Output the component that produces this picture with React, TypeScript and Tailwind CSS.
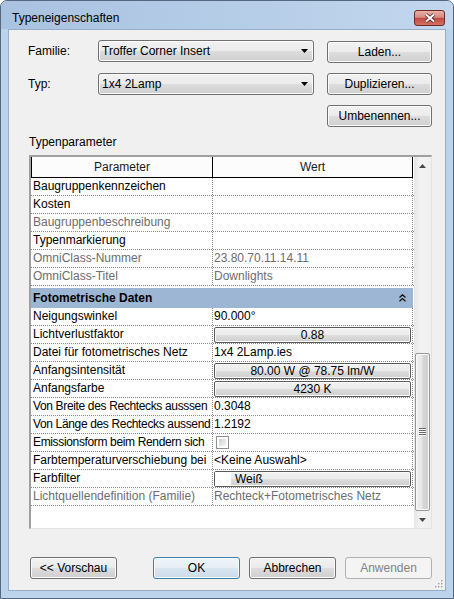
import type { ReactNode } from 'react';

type Param = {
  label: string;
  value?: string;
  readOnly?: boolean;
  tight?: boolean;
  kind?: 'text' | 'button' | 'check' | 'swatch';
};

// Identity data rows above the group header
const identity: Param[] = [
  { label: 'Baugruppenkennzeichen' },
  { label: 'Kosten' },
  { label: 'Baugruppenbeschreibung', readOnly: true },
  { label: 'Typenmarkierung' },
  { label: 'OmniClass-Nummer', value: '23.80.70.11.14.11', readOnly: true },
  { label: 'OmniClass-Titel', value: 'Downlights', readOnly: true },
];

// Labels are cut at the column edge the same way the grid shows them
const photometric: Param[] = [
  { label: 'Neigungswinkel', value: '90.000°' },
  { label: 'Lichtverlustfaktor', value: '0.88', kind: 'button' },
  { label: 'Datei für fotometrisches Netz', value: '1x4 2Lamp.ies' },
  { label: 'Anfangsintensität', value: '80.00 W @ 78.75 lm/W', kind: 'button' },
  { label: 'Anfangsfarbe', value: '4230 K', kind: 'button' },
  { label: 'Von Breite des Rechtecks ausssen', value: '0.3048', tight: true },
  { label: 'Von Länge des Rechtecks aussend', value: '1.2192', tight: true },
  { label: 'Emissionsform beim Rendern sich', kind: 'check', tight: true },
  { label: 'Farbtemperaturverschiebung bei', value: '<Keine Auswahl>' },
  { label: 'Farbfilter', value: 'Weiß', kind: 'swatch' },
  {
    label: 'Lichtquellendefinition (Familie)',
    value: 'Rechteck+Fotometrisches Netz',
    readOnly: true,
  },
];

const btnFace =
  'bg-[linear-gradient(#f2f2f2,#ebebeb_50%,#dddddd_50%,#cfcfcf)] shadow-[inset_0_0_0_1px_#fbfbfb]';

function WinButton({
  children,
  variant = 'normal',
}: {
  children: ReactNode;
  variant?: 'normal' | 'default' | 'disabled';
}) {
  const look =
    variant === 'default'
      ? 'border-[#3c7fb1] bg-[linear-gradient(#eef4fa,#e6eef6_50%,#d9e5ef_50%,#cddced)] shadow-[inset_0_0_0_1px_#f6fbff] text-black'
      : variant === 'disabled'
        ? 'border-[#adb2b5] bg-[#f4f4f4] text-[#838383]'
        : `border-[#707070] ${btnFace} text-black`;
  return (
    <div
      className={`flex h-[22px] w-full items-center justify-center rounded-[3px] border ${look}`}
    >
      {children}
    </div>
  );
}

function Combo({ text }: { text: string }) {
  return (
    <div
      className={`flex h-[22px] w-[216px] items-center justify-between rounded-[3px] border border-[#707070] pr-[5px] pl-[3px] ${btnFace}`}
    >
      <span>{text}</span>
      <svg width="7" height="4" viewBox="0 0 7 4">
        <path d="M0 0h7L3.5 4z" fill="#000" />
      </svg>
    </div>
  );
}

function CellButton({ children }: { children: ReactNode }) {
  return (
    <div
      className={`flex h-[16px] w-full items-center justify-center rounded-[2px] border border-[#5a5a5a] leading-none ${btnFace}`}
    >
      {children}
    </div>
  );
}

function ParamRow({ p }: { p: Param }) {
  const tone = p.readOnly ? 'text-[#6d6d6d]' : 'text-black';
  let value: ReactNode = null;
  if (p.kind === 'button') {
    value = <CellButton>{p.value}</CellButton>;
  } else if (p.kind === 'check') {
    value = (
      <div className="ml-[2px] h-[13px] w-[13px] border border-[#8e8f8f] bg-white p-[2px]">
        <div className="h-full w-full bg-linear-to-br from-[#cbcfd5] to-[#f6f6f6]" />
      </div>
    );
  } else if (p.kind === 'swatch') {
    value = (
      <div
        className={`flex h-[16px] w-full items-center rounded-[2px] border border-[#5a5a5a] leading-none ${btnFace}`}
      >
        <div className="h-full w-[16px] bg-white" />
        <span className="pl-[4px]">{p.value}</span>
      </div>
    );
  } else if (p.value) {
    value = <span className={tone}>{p.value}</span>;
  }
  return (
    <div className="flex h-[18px] border-b border-dotted border-[#8a8a8a]">
      <div
        className={`w-[182px] overflow-hidden border-r border-dotted border-[#8a8a8a] pl-[2px] leading-[17px] whitespace-nowrap ${tone} ${p.tight ? 'tracking-[-0.35px]' : ''}`}
      >
        {p.label}
      </div>
      <div className="flex w-[200px] items-center border-r border-dotted border-[#8a8a8a] pr-[1px] pl-[1px] leading-[17px] whitespace-nowrap">
        {value}
      </div>
    </div>
  );
}

function ScrollBar() {
  return (
    <div className="flex w-[17px] flex-col bg-[linear-gradient(90deg,#e6e6e6,#f3f3f3_40%,#f0f0f0)]">
      <div className="flex h-[17px] items-center justify-center">
        <svg width="7" height="4" viewBox="0 0 7 4">
          <path d="M3.5 0L7 4H0z" fill="#4a4a4a" />
        </svg>
      </div>
      <div className="flex flex-1 flex-col justify-end px-[1px]">
        <div className="flex h-[158px] items-center justify-center rounded-[2px] border border-[#979797] bg-[linear-gradient(90deg,#f2f2f2,#e6e6e6_45%,#d6d6d6_55%,#cfcfcf)] shadow-[inset_0_0_0_1px_#f9f9f9]">
          <svg width="7" height="8" viewBox="0 0 7 8">
            <path d="M0 0.5h7M0 2.5h7M0 4.5h7M0 6.5h7" stroke="#6a6a6a" />
            <path d="M0 1.5h7M0 3.5h7M0 5.5h7M0 7.5h7" stroke="#fcfcfc" />
          </svg>
        </div>
      </div>
      <div className="flex h-[17px] items-center justify-center">
        <svg width="7" height="4" viewBox="0 0 7 4">
          <path d="M0 0h7L3.5 4z" fill="#4a4a4a" />
        </svg>
      </div>
    </div>
  );
}

export default function App() {
  return (
    <div className="flex h-[599px] w-[454px] flex-col rounded-t-[7px] border border-[#55687f] bg-[#bcd3ec] font-['Liberation_Sans',Arial,sans-serif] text-[12px] text-black">
      {/* title bar */}
      <div className="flex h-[28px] shrink-0 items-start justify-between rounded-t-[6px] bg-linear-to-r from-[#a9c2e0] to-[#c2d7ee] pr-[8px] pl-[11px]">
        <span className="pt-[10px] leading-[15px] text-black">Typeneigenschaften</span>
        <div className="mt-[9px] flex h-[16px] w-[31px] items-center justify-center rounded-[3px] border border-[#6d2b27] bg-[linear-gradient(#eab0a7,#d98b80_45%,#c24a40_52%,#d56e63)]">
          <svg width="14" height="10" viewBox="0 0 14 10">
            <path d="M3 1.5l8 7M11 1.5l-8 7" stroke="#4a1f1c" strokeWidth="3.6" />
            <path d="M3 1.5l8 7M11 1.5l-8 7" stroke="#fff" strokeWidth="2" />
          </svg>
        </div>
      </div>

      {/* client */}
      <div className="relative mx-[7px] mb-[7px] flex flex-1 flex-col border border-[#97acc6] bg-[#f0f0f0]">
        <div className="flex">
          <div className="flex flex-col gap-[11px] pt-[10px] pl-[19px]">
            <div className="flex items-center">
              <span className="w-[70px]">Familie:</span>
              <Combo text="Troffer Corner Insert" />
            </div>
            <div className="flex items-center">
              <span className="w-[70px]">Typ:</span>
              <Combo text="1x4 2Lamp" />
            </div>
          </div>
          <div className="ml-[13px] flex w-[105px] flex-col gap-[10px] pt-[11px]">
            <WinButton>Laden...</WinButton>
            <WinButton>Duplizieren...</WinButton>
            <WinButton>Umbenennen...</WinButton>
          </div>
        </div>

        <div className="mt-[8px] pl-[20px] leading-[15px]">Typenparameter</div>

        {/* parameter grid */}
        <div className="mt-[5px] ml-[20px] flex h-[374px] w-[403px] border-t-2 border-r border-b border-l-2 border-t-[#a0a0a0] border-r-[#e3e3e3] border-b-[#e3e3e3] border-l-[#a0a0a0] bg-white">
          <div className="flex w-[383px] flex-col">
            <div className="flex h-[21px] text-[#1a1a1a]">
              <div className="flex w-[182px] items-center justify-center border-r border-b border-l border-black bg-[#fcfcfc]">
                Parameter
              </div>
              <div className="flex w-[200px] items-center justify-center border-r border-b border-black bg-[#fcfcfc]">
                Wert
              </div>
            </div>
            {identity.map(p => (
              <ParamRow key={p.label} p={p} />
            ))}
            <div className="mt-[2px] flex h-[20px] w-[382px] items-center justify-between bg-[#9db6d3] pr-[7px] pl-[2px] font-bold">
              <span>Fotometrische Daten</span>
              <svg width="7" height="8" viewBox="0 0 7 8">
                <path d="M0.5 3.5L3.5 0.8L6.5 3.5M0.5 7.2L3.5 4.5L6.5 7.2" stroke="#111" strokeWidth="1.3" fill="none" />
              </svg>
            </div>
            {photometric.map(p => (
              <ParamRow key={p.label} p={p} />
            ))}
          </div>
          <ScrollBar />
        </div>

        {/* dialog buttons */}
        <div className="mt-[28px] flex pl-[21px]">
          <div className="w-[87px]">
            <WinButton>{'<< Vorschau'}</WinButton>
          </div>
          <div className="ml-[36px] w-[87px]">
            <WinButton variant="default">OK</WinButton>
          </div>
          <div className="ml-[9px] w-[87px]">
            <WinButton>Abbrechen</WinButton>
          </div>
          <div className="ml-[9px] w-[87px]">
            <WinButton variant="disabled">Anwenden</WinButton>
          </div>
        </div>

        <svg
          className="absolute right-[1px] bottom-[1px]"
          width="10"
          height="10"
          viewBox="0 0 10 10"
        >
          {[
            [7, 1],
            [4, 4],
            [7, 4],
            [1, 7],
            [4, 7],
            [7, 7],
          ].map(([x, y]) => (
            <g key={`${x}-${y}`}>
              <rect x={x + 1} y={y + 1} width="1.5" height="1.5" fill="#fff" />
              <rect x={x} y={y} width="1.5" height="1.5" fill="#a3a3a3" />
            </g>
          ))}
        </svg>
      </div>
    </div>
  );
}
